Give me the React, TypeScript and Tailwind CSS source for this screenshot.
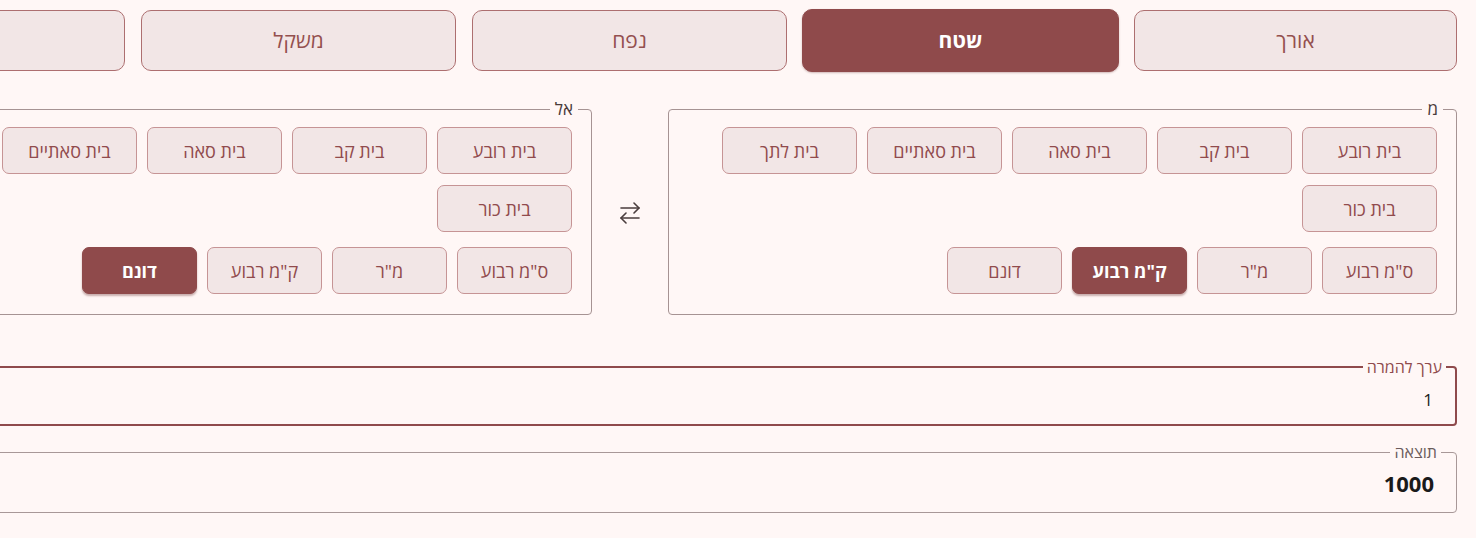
import React, { useState } from 'react'

const CATEGORIES = ['אורך', 'שטח', 'נפח', 'משקל', 'זמן']

const ANCIENT = ['בית רובע', 'בית קב', 'בית סאה', 'בית סאתיים', 'בית לתך', 'בית כור']
const MODERN = ['ס"מ רבוע', 'מ"ר', 'ק"מ רבוע', 'דונם']

function UnitButton({ label, active, onClick, wide }: { label: string; active: boolean; onClick: () => void; wide?: boolean }) {
  return (
    <button
      onClick={onClick}
      className={`${wide ? 'w-[135px]' : 'w-[115px]'} h-[47px] shrink-0 rounded-[7px] text-[18px] leading-none border ${
        active
          ? 'bg-[#8f4a4b] border-[#8f4a4b] text-white font-bold shadow-[0_2px_2px_rgba(100,40,40,0.35)]'
          : 'bg-[#f2e6e6] border-[#c69495] text-[#914b4d]'
      }`}
    >
      {label}
    </button>
  )
}

function UnitPicker({ title, value, onChange }: { title: string; value: string; onChange: (v: string) => void }) {
  return (
    <fieldset className="w-[789px] shrink-0 border border-[#a69393] rounded-[4px] p-0">
      <legend className="mr-[13px] px-[5px] text-[17px] leading-5 font-medium text-[#4b3b3b]">{title}</legend>
      <div className="px-[19px] pt-2 pb-5">
        <div className="flex flex-wrap gap-x-[10px] gap-y-[11px]">
          {ANCIENT.map(u => (
            <UnitButton key={u} label={u} wide active={value === u} onClick={() => onChange(u)} />
          ))}
        </div>
        <div className="flex flex-wrap gap-[10px] mt-[15px]">
          {MODERN.map(u => (
            <UnitButton key={u} label={u} active={value === u} onClick={() => onChange(u)} />
          ))}
        </div>
      </div>
    </fieldset>
  )
}

function SwapIcon() {
  return (
    <svg width="20" height="24" viewBox="0 0 20 24" fill="none" stroke="#4a3d3d" strokeWidth="1.6" strokeLinecap="round" strokeLinejoin="round">
      <path d="M1 7h18" />
      <path d="M14 2l5 5-5 5" />
      <path d="M19 17H1" />
      <path d="M6 12l-5 5 5 5" />
    </svg>
  )
}

export default function App() {
  const [category, setCategory] = useState('שטח')
  const [from, setFrom] = useState('ק"מ רבוע')
  const [to, setTo] = useState('דונם')
  const [amount, setAmount] = useState('1')

  return (
    <div dir="rtl" className="min-h-screen overflow-hidden bg-[#fff7f6] font-['Open_Sans','Noto_Sans','DejaVu_Sans',sans-serif]">
      <div className="w-[1654px] mr-[19px] pt-[9px]">
        <div className="flex items-center gap-4 h-[63px]">
          {CATEGORIES.map((c, i) => {
            const active = c === category
            return (
              <button
                key={c}
                onClick={() => setCategory(c)}
                className={`${i === 0 ? 'w-[323px]' : 'w-[315px]'} shrink-0 rounded-[10px] border text-[21px] ${
                  active
                    ? 'h-[63px] -mx-px w-[317px] bg-[#8f4a4b] border-[#8f4a4b] text-white font-bold shadow-[0_1px_2px_rgba(100,40,40,0.3)]'
                    : 'h-[61px] bg-[#f2e6e6] border-[#ad6f70] text-[#94504f]'
                }`}
              >
                {c}
              </button>
            )
          })}
        </div>

        <div className="flex items-center mt-[27px]">
          <UnitPicker title="מ" value={from} onChange={setFrom} />
          <div className="w-[76px] shrink-0 flex justify-center mt-[11px]">
            <button
              onClick={() => {
                setFrom(to)
                setTo(from)
              }}
            >
              <SwapIcon />
            </button>
          </div>
          <UnitPicker title="אל" value={to} onChange={setTo} />
        </div>

        <fieldset className="mt-[44px] border-2 border-[#8f4a4c] rounded-[4px] p-0">
          <legend className="mr-[9px] px-[4px] text-[16px] leading-4 text-[#8f4a4c]">ערך להמרה</legend>
          <div className="h-[49px] flex items-center pr-[22px]">
            <input
              value={amount}
              onChange={e => setAmount(e.target.value)}
              className="w-full bg-transparent outline-none text-[17px] text-[#222]"
            />
          </div>
        </fieldset>

        <fieldset className="mt-[18px] border border-[#a89898] rounded-[4px] p-0">
          <legend className="mr-[15px] px-[4px] text-[16px] leading-4 text-[#6b5c5c]">תוצאה</legend>
          <div className="h-[52px] flex items-center pr-[22px] pb-[5px] text-[22px] font-bold text-[#1a1a1a]">1000</div>
        </fieldset>
      </div>
    </div>
  )
}
